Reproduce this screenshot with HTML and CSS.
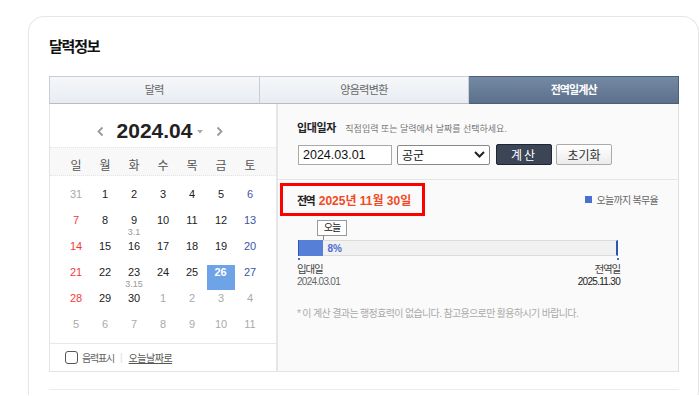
FILE: index.html
```html
<!DOCTYPE html>
<html lang="ko">
<head>
<meta charset="UTF-8">
<meta name="viewport" content="width=device-width, initial-scale=1.0">
<title>달력정보</title>
<link rel="stylesheet" href="styles.css">
</head>
<body>

<div class="card">
    <h2 class="card-title">달력정보</h2>

    <div class="tabs">
        <div class="tab">달력</div>
        <div class="tab">양음력변환</div>
        <div class="tab active">전역일계산</div>
    </div>

    <div class="panels">
        <!-- calendar -->
        <div class="cal">
            <div class="cal-head">
                <svg class="arrow" width="7" height="11" viewBox="0 0 7 11"><path d="M5.5 1.5 L1.5 5.5 L5.5 9.5" fill="none" stroke="#9a9a9a" stroke-width="1.8"/></svg>
                <span class="cal-month">2024.04</span>
                <svg class="caret" width="6" height="4" viewBox="0 0 6 4"><path d="M0 0 H6 L3 3.5 Z" fill="#aaa"/></svg>
                <svg class="arrow next" width="7" height="11" viewBox="0 0 7 11"><path d="M1.5 1.5 L5.5 5.5 L1.5 9.5" fill="none" stroke="#9a9a9a" stroke-width="1.8"/></svg>
            </div>
            <div class="week">
                <span>일</span><span>월</span><span>화</span><span>수</span><span>목</span><span>금</span><span>토</span>
            </div>
            <div class="days">
                <div class="day off">31</div>
                <div class="day">1</div>
                <div class="day">2</div>
                <div class="day">3</div>
                <div class="day">4</div>
                <div class="day">5</div>
                <div class="day sat">6</div>

                <div class="day sun">7</div>
                <div class="day">8</div>
                <div class="day">9<small>3.1</small></div>
                <div class="day">10</div>
                <div class="day">11</div>
                <div class="day">12</div>
                <div class="day sat">13</div>

                <div class="day sun">14</div>
                <div class="day">15</div>
                <div class="day">16</div>
                <div class="day">17</div>
                <div class="day">18</div>
                <div class="day">19</div>
                <div class="day sat">20</div>

                <div class="day sun">21</div>
                <div class="day">22</div>
                <div class="day">23<small>3.15</small></div>
                <div class="day">24</div>
                <div class="day">25</div>
                <div class="day today">26</div>
                <div class="day sat">27</div>

                <div class="day sun">28</div>
                <div class="day">29</div>
                <div class="day">30</div>
                <div class="day off">1</div>
                <div class="day off">2</div>
                <div class="day off">3</div>
                <div class="day off">4</div>

                <div class="day off">5</div>
                <div class="day off">6</div>
                <div class="day off">7</div>
                <div class="day off">8</div>
                <div class="day off">9</div>
                <div class="day off">10</div>
                <div class="day off">11</div>
            </div>
            <div class="cal-foot">
                <span class="check"></span>
                <span class="foot-label">음력표시</span>
                <span class="bar-sep">|</span>
                <a class="foot-link">오늘날짜로</a>
            </div>
        </div>

        <!-- discharge calc -->
        <div class="calc">
            <div class="calc-form">
                <div class="form-title">
                    <b>입대일자</b>
                    <span class="hint">직접입력 또는 달력에서 날짜를 선택하세요.</span>
                </div>
                <div class="form-row">
                    <input class="date-input" type="text" value="2024.03.01">
                    <div class="select">
                        <span>공군</span>
                        <svg width="11" height="7" viewBox="0 0 11 7"><path d="M1 1 L5.5 5.5 L10 1" fill="none" stroke="#222" stroke-width="2"/></svg>
                    </div>
                    <button class="btn btn-dark">계산</button>
                    <button class="btn btn-light">초기화</button>
                </div>
            </div>

            <div class="result-head">
                <div class="result-date"><b class="lbl">전역</b> <span class="red">2025년 11월 30일</span></div>
                <div class="legend"><i></i>오늘까지 복무율</div>
            </div>

            <div class="progress">
                <div class="marker">오늘</div>
                <div class="marker-line"></div>
                <div class="track">
                    <div class="fill" style="width: 8%"></div>
                    <span class="pct">8%</span>
                </div>
                <div class="ticks"><i></i><i></i></div>
                <div class="ends">
                    <div>
                        <div class="end-name">입대일</div>
                        <div class="end-date">2024.03.01</div>
                    </div>
                    <div class="right">
                        <div class="end-name">전역일</div>
                        <div class="end-date dark">2025.11.30</div>
                    </div>
                </div>
            </div>

            <p class="note">* 이 계산 결과는 행정효력이 없습니다. 참고용으로만 활용하시기 바랍니다.</p>
        </div>
    </div>

    <div class="next-section"></div>
</div>

</body>
</html>
```

FILE: styles.css
```css
body {
    margin: 0;
    background: #fff;
    font-family: "Liberation Sans", "Noto Sans CJK KR", sans-serif;
    color: #222;
}

.card {
    width: 630px;
    margin: 16px 0 0 28px;
    padding: 0 19px 5px 20px;
    border: 1px solid #e6e6e6;
    border-bottom: none;
    border-radius: 16px 16px 0 0;
}

.card-title {
    margin: 20px 0 19px;
    font-size: 15px;
    line-height: 20px;
    font-weight: bold;
    letter-spacing: -1.2px;
    color: #111;
}

/* tabs */
.tabs {
    display: flex;
    height: 28px;
}
.tab {
    flex: 1;
    border: 1px solid #c9ced6;
    border-bottom-color: #b5bcc7;
    border-left: none;
    background: linear-gradient(to bottom, #f5f7fa, #e8ecf1);
    color: #666;
    font-size: 11px;
    letter-spacing: -0.6px;
    line-height: 26px;
    text-align: center;
}
.tab:first-child {
    border-left: 1px solid #c9ced6;
}
.tab.active {
    background: linear-gradient(to bottom, #7489a4, #5c708c);
    border-color: #4d5e76;
    color: #fff;
    font-weight: bold;
    letter-spacing: -0.9px;
}

/* panels */
.panels {
    display: flex;
    height: 268px;
}

.cal {
    width: 226px;
    border-left: 1px solid #e3e3e3;
    border-right: 2px solid #e6e6e6;
    border-bottom: 1px solid #e3e3e3;
    display: flex;
    flex-direction: column;
}

.cal-head {
    display: flex;
    align-items: center;
    justify-content: center;
    padding: 15px 6px 4px 0;
    height: 24px;
}
.cal-month {
    font-size: 21px;
    font-weight: bold;
    color: #222;
    margin-left: 13px;
}
.caret {
    margin-left: 5px;
    margin-top: 2px;
}
.arrow.next {
    margin-left: 13px;
}

.week {
    display: grid;
    grid-template-columns: repeat(7, 29px);
    justify-content: center;
    background: #f8f8f8;
    border-top: 1px dotted #e4e4e4;
    border-bottom: 1px dotted #e4e4e4;
    padding: 11px 0 2px;
}
.week span {
    text-align: center;
    font-size: 12px;
    line-height: 14px;
    color: #555;
}

.days {
    display: grid;
    grid-template-columns: repeat(7, 29px);
    grid-auto-rows: 26px;
    justify-content: center;
    padding-top: 11px;
}
.day {
    text-align: center;
    font-size: 11px;
    line-height: 14px;
    color: #222;
}
.day small {
    display: block;
    font-size: 9px;
    line-height: 10px;
    color: #999;
}
.day.sun { color: #f33b3b; }
.day.sat { color: #3a56a5; }
.day.off { color: #aaa; }
.day.today {
    background: #6fa3e8;
    color: #fff;
    font-weight: bold;
    margin: 0 1px 1px 0;
}

.cal-foot {
    margin-top: auto;
    border-top: 1px solid #e8e8e8;
    height: 27px;
    display: flex;
    align-items: center;
    padding-left: 15px;
    font-size: 10px;
    letter-spacing: -1.2px;
}
.check {
    width: 11px;
    height: 11px;
    border: 1px solid #555;
    border-radius: 3px;
    background: #fff;
    margin-right: 4px;
}
.foot-label { color: #666; }
.bar-sep {
    color: #ddd;
    margin: 0 6px;
    letter-spacing: 0;
}
.foot-link {
    color: #555;
    text-decoration: underline;
    letter-spacing: -0.5px;
}

/* calc panel */
.calc {
    width: 400px;
    background: #fafafa;
    border-right: 1px solid #e0e0e0;
    border-bottom: 1px solid #e3e3e3;
}

.calc-form {
    padding: 16px 20px 14px 19px;
    border-bottom: 1px solid #e6e6e6;
}
.form-title {
    line-height: 14px;
    margin-bottom: 8px;
}
.form-title b {
    font-size: 11px;
    letter-spacing: -0.4px;
    color: #222;
}
.hint {
    margin-left: 5px;
    font-size: 9px;
    letter-spacing: 0;
    color: #777;
}

.form-row {
    display: flex;
    align-items: center;
    height: 21px;
}
.date-input {
    box-sizing: border-box;
    width: 94px;
    height: 20px;
    margin: 0 0 0 1px;
    padding: 0 4px;
    border: 1px solid #a9a9a9;
    background: #fff;
    font-family: "Liberation Sans", sans-serif;
    font-size: 12.5px;
    color: #111;
}
.select {
    box-sizing: border-box;
    width: 93px;
    height: 20px;
    margin-left: 5px;
    border: 1px solid #888;
    border-radius: 2px;
    background: #fff;
    display: flex;
    align-items: center;
    justify-content: space-between;
    padding: 0 4px;
    font-size: 12px;
    color: #111;
}
.btn {
    box-sizing: border-box;
    width: 56px;
    height: 21px;
    padding: 0;
    border-radius: 2px;
    font-family: "Liberation Sans", "Noto Sans CJK KR", sans-serif;
    font-size: 12px;
}
.btn-dark {
    margin-left: 6px;
    background: #3b4556;
    border: 1px solid #1f2633;
    color: #fff;
    letter-spacing: 2px;
}
.btn-light {
    margin-left: 4px;
    background: linear-gradient(to bottom, #fff, #ececec);
    border: 1px solid #aaa;
    color: #333;
}

.result-head {
    display: flex;
    align-items: center;
    justify-content: space-between;
    margin: 3px 20px 0 2px;
}
.result-date {
    box-sizing: border-box;
    width: 145px;
    height: 33px;
    border: 3px solid #f00;
    padding: 0 0 0 14px;
    line-height: 27px;
    white-space: nowrap;
}
.result-date .lbl {
    font-size: 11px;
    letter-spacing: -1.5px;
    color: #222;
}
.red {
    font-size: 12px;
    font-weight: bold;
    letter-spacing: 0;
    color: #f04a25;
}
.legend {
    display: flex;
    align-items: center;
    font-size: 10px;
    letter-spacing: -0.7px;
    color: #666;
}
.legend i {
    width: 7px;
    height: 7px;
    background: #4b6fcd;
    margin-right: 4px;
}

.progress {
    position: relative;
    width: 322px;
    margin: 4px 0 0 20px;
    padding-top: 20px;
}
.marker {
    position: absolute;
    top: 0;
    left: 19px;
    box-sizing: border-box;
    width: 30px;
    height: 16px;
    border: 1px solid #999;
    background: #fff;
    font-size: 10px;
    letter-spacing: -1px;
    line-height: 14px;
    text-align: center;
    color: #222;
}
.marker-line {
    position: absolute;
    top: 15px;
    left: 25px;
    width: 1px;
    height: 5px;
    background: #888;
}
.track {
    box-sizing: border-box;
    width: 320px;
    height: 16px;
    display: flex;
    align-items: center;
    background: #f1f1f1;
    border: 1px solid #dcdcdc;
    border-left: none;
    border-right: 2px solid #2f55b0;
}
.fill {
    height: 16px;
    margin-top: -1px;
    margin-bottom: -1px;
    box-sizing: border-box;
    background: #5680d8;
    border-left: 1px solid #2f55b0;
}
.pct {
    margin-left: 4px;
    font-size: 10px;
    font-weight: bold;
    color: #4a6fd0;
}

.ticks {
    display: flex;
    justify-content: space-between;
    width: 321px;
    height: 6px;
    align-items: center;
}
.ticks i {
    width: 2px;
    height: 2px;
    background: #4a6fd0;
}

.ends {
    display: flex;
    justify-content: space-between;
    margin-left: -1px;
}
.ends .right { text-align: right; }
.end-name {
    font-size: 10.5px;
    letter-spacing: -1.2px;
    line-height: 14px;
    color: #444;
}
.end-date {
    font-size: 10px;
    letter-spacing: -0.7px;
    line-height: 12px;
    color: #666;
}
.end-date.dark { color: #222; }

.note {
    margin: 19px 0 0 19px;
    font-size: 10px;
    letter-spacing: -0.65px;
    line-height: 14px;
    color: #aaa;
}

.next-section {
    margin-top: 17px;
    border-top: 1px solid #ececec;
}
```
